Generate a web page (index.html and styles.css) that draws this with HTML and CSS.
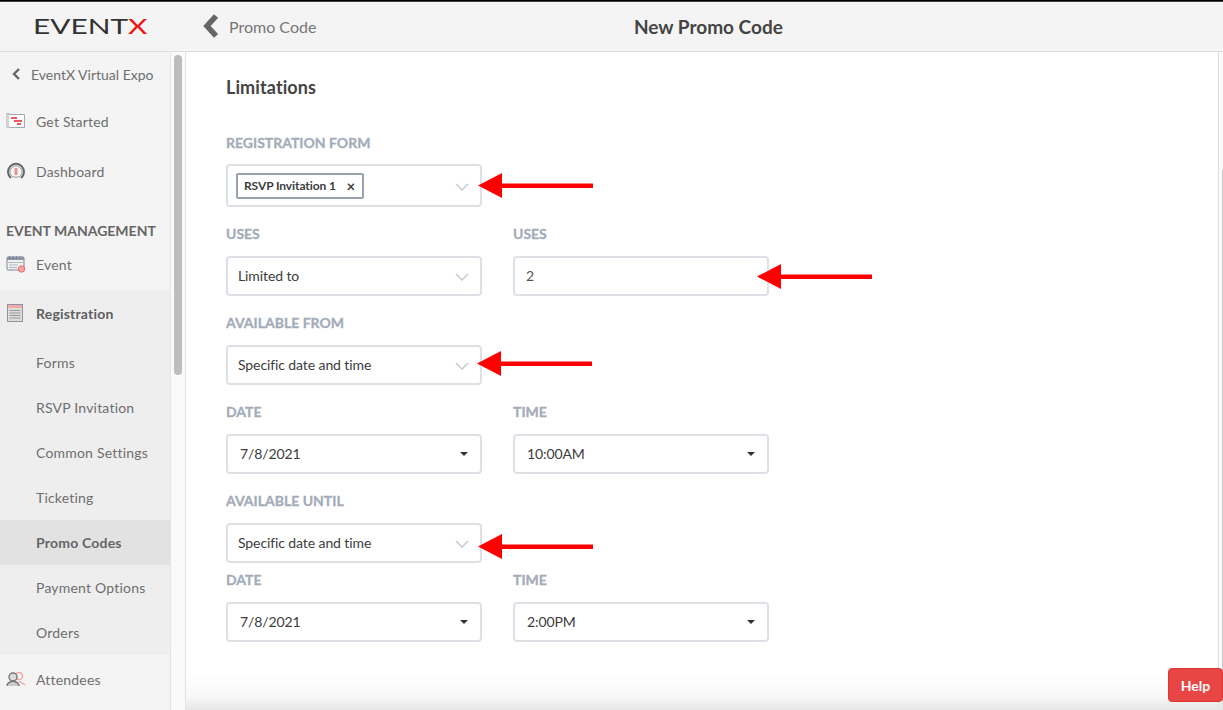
FILE: index.html
```html
<!DOCTYPE html>
<html lang="en">
<head>
    <meta charset="UTF-8">
    <meta name="viewport" content="width=device-width, initial-scale=1.0">
    <title>New Promo Code</title>
    <link rel="stylesheet" href="styles.css">
</head>
<body>
    <!-- Top bar -->
    <header class="topbar">
        <div class="logo"><span class="logo-text">EVENT<span class="logo-x">X</span></span></div>
        <div class="crumb">
            <svg class="crumb-icon" width="16" height="24" viewBox="0 0 16 24"><path d="M14 2 L5 12 L14 22" fill="none" stroke="#666" stroke-width="5.5"/></svg>
            <span>Promo Code</span>
        </div>
        <h1 class="page-title">New Promo Code</h1>
    </header>

    <div class="layout">
        <!-- Sidebar -->
        <nav class="sidebar">
            <a class="back-link">
                <svg width="10" height="12" viewBox="0 0 10 12"><path d="M8 1 L3 6 L8 11" fill="none" stroke="#666" stroke-width="2.4"/></svg>
                EventX Virtual Expo
            </a>
            <a class="nav-item nav-started">
                <svg class="nav-icon" width="20" height="18" viewBox="0 0 20 18"><path d="M1 1.5 H3 V15 H1 Z" fill="#fff" stroke="#aaa"/><path d="M3 2.5 H18.5 V15.5 H3" fill="#fff" stroke="#aaa"/><path d="M5 6 H11 M8 9 H16 M11 12 H15" stroke="#e8202a" stroke-width="1.5"/></svg>
                Get Started
            </a>
            <a class="nav-item nav-dash">
                <svg class="nav-icon" width="20" height="20" viewBox="0 0 20 20"><path d="M5 17 A8 8 0 1 1 15 17" fill="#eee" stroke="#666" stroke-width="2"/><path d="M7 16 A6 6 0 1 1 13 16 Z" fill="#f7f7f7" stroke="#999"/><path d="M10 7 V14" stroke="#ef8f8f" stroke-width="3"/></svg>
                Dashboard
            </a>
            <div class="nav-heading">EVENT MANAGEMENT</div>
            <a class="nav-item nav-event">
                <svg class="nav-icon" width="20" height="18" viewBox="0 0 20 18"><rect x="1" y="2" width="17" height="13" rx="1" fill="#f2f2f2" stroke="#7d8794"/><rect x="1" y="2" width="17" height="3" fill="#8c96a2"/><path d="M3.5 1 V4 M7 1 V4 M10.500 1 V4 M14 1 V4" stroke="#7d8794"/><path d="M2 7.500 H17 M3 10 H12 M3 12.500 H11" stroke="#b0b6bd"/><circle cx="15.500" cy="14" r="3.200" fill="#f7a5a5" stroke="#f06a6a"/></svg>
                Event
            </a>
            <div class="nav-group">
                <a class="nav-item nav-reg">
                    <svg class="nav-icon" width="20" height="20" viewBox="0 0 20 20"><rect x="1.500" y="1.500" width="15" height="17" fill="#ddd" stroke="#8c96a2"/><rect x="2" y="2" width="14" height="3" fill="#f3a9a9"/><path d="M3.500 7.500 H14.500 M3.500 10 H14.500 M3.500 12.500 H14.500 M3.500 15 H14.500" stroke="#999"/></svg>
                    Registration
                </a>
                <a class="sub-item sub-forms">Forms</a>
                <a class="sub-item">RSVP Invitation</a>
                <a class="sub-item">Common Settings</a>
                <a class="sub-item">Ticketing</a>
                <a class="sub-item sub-active">Promo Codes</a>
                <a class="sub-item">Payment Options</a>
                <a class="sub-item">Orders</a>
            </div>
            <a class="nav-item nav-attendees">
                <svg class="nav-icon" width="20" height="16" viewBox="0 0 20 16"><circle cx="13" cy="5" r="3.6" fill="none" stroke="#f4a3a3" stroke-width="1.5"/><path d="M13 10 L19 14" stroke="#f4a3a3" stroke-width="1.5"/><circle cx="7" cy="6" r="4" fill="#ddd" stroke="#777" stroke-width="1.4"/><path d="M1 15 C1 11 4 11 7 10 C10 11 13 11 13 15" fill="#ccc" stroke="#777" stroke-width="1.4"/></svg>
                Attendees
            </a>
        </nav>

        <div class="nav-scroll"><div class="nav-thumb"></div></div>

        <!-- Main form -->
        <main class="content">
            <h2 class="section-title">Limitations</h2>

            <div class="field-label label-form">REGISTRATION FORM</div>
            <div class="row">
                <div class="control control-tall">
                    <span class="tag">RSVP Invitation 1 <span class="tag-x">×</span></span>
                    <svg class="chevron" width="14" height="8" viewBox="0 0 14 8"><path d="M1 1 L7 7 L13 1" fill="none" stroke="#ccc" stroke-width="1.6"/></svg>
                </div>
                <svg class="arrow arrow-form" width="115" height="25" viewBox="0 0 115 25"><path d="M0 12.500 L24 0 V10.500 H115 V15 H24 V25 Z" fill="#f00"/></svg>
            </div>

            <div class="label-row label-uses"><div class="field-label">USES</div><div class="field-label">USES</div></div>
            <div class="row">
                <div class="control">
                    Limited to
                    <svg class="chevron" width="14" height="8" viewBox="0 0 14 8"><path d="M1 1 L7 7 L13 1" fill="none" stroke="#ccc" stroke-width="1.6"/></svg>
                </div>
                <div class="control control-input">2</div>
                <svg class="arrow arrow-uses" width="115" height="25" viewBox="0 0 115 25"><path d="M0 12.500 L24 0 V10.500 H115 V15 H24 V25 Z" fill="#f00"/></svg>
            </div>

            <div class="field-label label-gap">AVAILABLE FROM</div>
            <div class="row">
                <div class="control">
                    Specific date and time
                    <svg class="chevron" width="14" height="8" viewBox="0 0 14 8"><path d="M1 1 L7 7 L13 1" fill="none" stroke="#ccc" stroke-width="1.6"/></svg>
                </div>
                <svg class="arrow arrow-from" width="115" height="25" viewBox="0 0 115 25"><path d="M0 12.500 L24 0 V10.500 H115 V15 H24 V25 Z" fill="#f00"/></svg>
            </div>

            <div class="label-row label-gap"><div class="field-label">DATE</div><div class="field-label">TIME</div></div>
            <div class="row">
                <div class="control control-pick">7/8/2021<span class="caret"></span></div>
                <div class="control control-pick">10:00AM<span class="caret"></span></div>
            </div>

            <div class="field-label label-gap">AVAILABLE UNTIL</div>
            <div class="row">
                <div class="control">
                    Specific date and time
                    <svg class="chevron" width="14" height="8" viewBox="0 0 14 8"><path d="M1 1 L7 7 L13 1" fill="none" stroke="#ccc" stroke-width="1.6"/></svg>
                </div>
                <svg class="arrow arrow-until" width="115" height="25" viewBox="0 0 115 25"><path d="M0 12.500 L24 0 V10.500 H115 V15 H24 V25 Z" fill="#f00"/></svg>
            </div>

            <div class="label-row label-date2"><div class="field-label">DATE</div><div class="field-label">TIME</div></div>
            <div class="row">
                <div class="control control-pick">7/8/2021<span class="caret"></span></div>
                <div class="control control-pick">2:00PM<span class="caret"></span></div>
            </div>
        </main>

        <div class="page-scroll"><div class="page-thumb"></div></div>
    </div>

    <div class="bottom-fade"></div>
    <button class="help-btn">Help</button>
</body>
</html>
```
FILE: styles.css
```css
/* Base */
html, body {
    height: 100%;
}

body {
    margin: 0;
    overflow: hidden;
    font-family: Lato, "Open Sans", sans-serif;
    font-size: 14px;
    color: #3c3c3c;
    background-color: #fff;
    display: flex;
    flex-direction: column;
}

/* Top bar */
.topbar {
    flex: none;
    height: 50px;
    display: flex;
    align-items: center;
    position: relative;
    background-color: #f4f4f4;
    border-top: 1px solid #000;
    border-bottom: 1px solid #ddd;
    box-shadow: inset 0 1px 0 #444;
}

.logo {
    width: 202px;
    padding-left: 33px;
    box-sizing: border-box;
}

.logo-text {
    display: inline-block;
    font-size: 21px;
    font-weight: 400;
    line-height: 24px;
    color: #333;
    transform: scaleX(1.42);
    transform-origin: left center;
}

.logo-x {
    color: #f01010;
}

.crumb {
    display: flex;
    align-items: center;
    gap: 11px;
    font-size: 16px;
    color: #777;
}

.page-title {
    position: absolute;
    left: 634px;
    top: 14px;
    margin: 0;
    font-size: 19px;
    line-height: 24px;
    font-weight: 700;
    color: #444;
}

/* Columns */
.layout {
    flex: 1;
    min-height: 0;
    display: flex;
}

/* Sidebar */
.sidebar {
    flex: none;
    width: 170px;
    background-color: #f4f4f4;
    border-right: 1px solid #e4e4e4;
    color: #6e6e6e;
}

.back-link {
    display: flex;
    align-items: center;
    gap: 10px;
    height: 20px;
    margin-top: 12px;
    padding-left: 11px;
    font-size: 14px;
}

.nav-item {
    display: flex;
    align-items: center;
    height: 24px;
    padding-left: 6px;
    font-size: 14px;
    letter-spacing: 0.2px;
}

.nav-icon {
    flex: none;
    margin-right: 10px;
}

.nav-started {
    margin-top: 25px;
}

.nav-dash {
    margin-top: 26px;
}

.nav-heading {
    margin-top: 39px;
    padding-left: 6px;
    font-size: 14px;
    line-height: 18px;
    font-weight: 700;
    color: #666;
}

.nav-event {
    margin-top: 12px;
}

.nav-group {
    margin-top: 14px;
    padding-top: 11px;
    background-color: #eee;
}

.nav-reg {
    font-weight: 700;
    color: #5f5f5f;
}

.sub-item {
    display: flex;
    align-items: center;
    height: 45px;
    padding-left: 36px;
    font-size: 14px;
    letter-spacing: 0.2px;
}

.sub-forms {
    margin-top: 15px;
}

.sub-active {
    background-color: #e2e2e2;
    font-weight: 700;
    color: #666;
}

.nav-attendees {
    margin-top: 12px;
}

/* Sidebar scrollbar */
.nav-scroll {
    flex: none;
    width: 15px;
    padding: 3px 3px 0;
    box-sizing: border-box;
    background-color: #fafafa;
    border-right: 1px solid #e2e2e2;
}

.nav-thumb {
    height: 320px;
    border-radius: 4px;
    background-color: #bdbdbd;
}

/* Form */
.content {
    flex: 1;
    padding: 22px 0 0 40px;
}

.section-title {
    margin: 0;
    font-size: 18px;
    line-height: 26px;
    font-weight: 700;
    letter-spacing: 0.1px;
    color: #444;
}

.field-label {
    font-size: 14px;
    line-height: 18px;
    font-weight: 700;
    -webkit-text-stroke: 0.3px #a3acb9;
    color: #a3acb9;
}

.label-form {
    margin-top: 34px;
    margin-bottom: 12px;
}

.label-row {
    display: grid;
    grid-template-columns: 256px 256px;
    column-gap: 31px;
    margin-bottom: 13px;
}

.label-uses {
    margin-top: 18px;
}

.label-gap {
    margin-top: 18px;
    margin-bottom: 13px;
}

.label-date2 {
    margin-top: 8px;
}

.row {
    position: relative;
    display: grid;
    grid-template-columns: 256px 256px;
    column-gap: 31px;
}

.control {
    position: relative;
    display: flex;
    align-items: center;
    height: 40px;
    padding: 0 0 2px 10px;
    box-sizing: border-box;
    background-color: #fff;
    border: 2px solid #dde1e6;
    border-radius: 4px;
    font-size: 14px;
    letter-spacing: -0.1px;
    color: #3c3c3c;
}

.control-tall {
    height: 43px;
    padding: 0 0 0 8px;
}

.control-input {
    padding-left: 11px;
    color: #555;
}

.control-pick {
    padding-left: 12px;
}

.chevron {
    position: absolute;
    right: 11px;
    top: 50%;
    margin-top: -3px;
}

.caret {
    position: absolute;
    right: 12px;
    top: 50%;
    margin-top: -2px;
    border-left: 4px solid transparent;
    border-right: 4px solid transparent;
    border-top: 4px solid #333;
}

.tag {
    display: flex;
    align-items: center;
    height: 26px;
    padding: 0 7px 0 6px;
    box-sizing: border-box;
    border: 2px solid #98a2ae;
    border-radius: 2px;
    font-size: 12px;
    font-weight: 700;
    color: #3c3c3c;
    white-space: pre;
}

.tag-x {
    margin-left: 8px;
    font-size: 15px;
    line-height: 14px;
}

/* Annotation arrows over the form */
.arrow {
    position: absolute;
    left: 252px;
}

.arrow-form {
    top: 9px;
}

.arrow-uses {
    left: 531px;
    top: 8px;
}

.arrow-from {
    left: 251px;
    top: 6px;
}

.arrow-until {
    top: 11px;
}

/* Page scrollbar */
.page-scroll {
    flex: none;
    width: 5px;
    padding-top: 118px;
    box-sizing: border-box;
    background-color: #fbfbfb;
    border-left: 1px solid #ddd;
}

.page-thumb {
    height: 540px;
    border-right: 1px solid #ccc;
}

/* Bottom shadow and help */
.bottom-fade {
    position: absolute;
    left: 186px;
    right: 0;
    bottom: 0;
    height: 36px;
    background: linear-gradient(to bottom, rgba(230, 230, 230, 0), rgba(230, 230, 230, 0.25) 60%, #e6e6e6);
}

.help-btn {
    position: absolute;
    right: 0;
    bottom: 8px;
    width: 55px;
    height: 34px;
    border: 1px solid #e03535;
    border-radius: 4px;
    background-color: #e84545;
    color: #fff;
    font-family: Lato, sans-serif;
    font-size: 14px;
    font-weight: 700;
}
```
